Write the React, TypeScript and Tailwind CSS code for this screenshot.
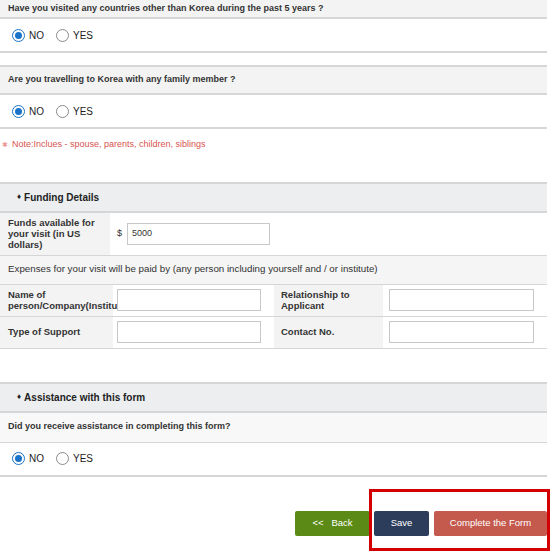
import React from 'react';

function Radio({ checked, label }: { checked?: boolean; label: string }) {
  return (
    <label className="flex items-center gap-[4px]">
      <span
        className={`flex h-[13px] w-[13px] items-center justify-center rounded-full border ${
          checked ? 'border-[#1a73c9]' : 'border-[#8a8a8a]'
        } bg-white`}
      >
        {checked && <span className="h-[7px] w-[7px] rounded-full bg-[#1a73c9]" />}
      </span>
      <span className="text-[10px] text-[#222]">{label}</span>
    </label>
  );
}

function RadioRow() {
  return (
    <div className="flex h-[34px] items-center gap-[12px] border-b-2 border-[#d6d6d6] pl-[12px]">
      <Radio checked label="NO" />
      <Radio label="YES" />
    </div>
  );
}

function SectionHeader({ title }: { title: string }) {
  return (
    <div className="flex h-[31px] items-center border-y-2 border-[#d4d6d8] bg-[#eceef0] pl-[17px] text-[10px] font-bold text-[#222]">
      <span className="mr-[3px] text-[8px]">♦</span>
      {title}
    </div>
  );
}

function TextInput({ value, className }: { value?: string; className: string }) {
  return (
    <div
      className={`relative z-10 flex h-[22px] items-center border border-[#c8c8c8] bg-white pl-[4px] text-[9px] text-[#333] ${className}`}
    >
      {value}
    </div>
  );
}

export default function App() {
  return (
    <div className="relative h-[558px] w-[553px] overflow-hidden bg-white font-['Liberation_Sans',Arial,sans-serif]">
      <div className="w-[547px]">
        {/* Question 1 */}
        <div className="flex h-[19px] items-center border-b-2 border-[#d6d6d6] bg-[#f3f3f3] pl-[8px] text-[9px] font-bold text-[#333]">
          Have you visited any countries other than Korea during the past 5 years ?
        </div>
        <RadioRow />

        {/* Question 2 */}
        <div className="mt-[12px] flex h-[30px] items-center border-y-2 border-[#d6d6d6] bg-[#f3f3f3] pl-[8px] text-[9px] font-bold text-[#333]">
          Are you travelling to Korea with any family member ?
        </div>
        <RadioRow />

        <div className="mt-[9px] flex items-center pl-[2px] text-[9px] text-[#d9534f]">
          <span className="mr-[4px] text-[7px] text-[#e99]">✱</span>
          Note:Inclues - spouse, parents, children, siblings
        </div>

        {/* Funding Details */}
        <div className="mt-[30px]">
          <SectionHeader title="Funding Details" />
          <div className="flex h-[43px] border-b border-[#d6d6d6]">
            <div className="flex w-[110px] items-center bg-[#f3f3f3] pl-[8px] text-[9.5px] font-bold leading-[11px] text-[#333]">
              Funds available for your visit (in US dollars)
            </div>
            <div className="flex items-center pl-[7px]">
              <span className="mr-[5px] text-[9px] text-[#333]">$</span>
              <TextInput value="5000" className="w-[143px]" />
            </div>
          </div>
          <div className="flex h-[29px] items-center border-b border-[#d6d6d6] bg-[#f5f5f5] pl-[8px] text-[9.75px] text-[#333]">
            Expenses for your visit will be paid by (any person including yourself and / or institute)
          </div>
          <div className="flex h-[32px] border-b border-[#d6d6d6]">
            <div className="flex w-[113px] items-center whitespace-nowrap bg-[#f3f3f3] pl-[8px] text-[9.5px] font-bold leading-[11px] text-[#333]">
              <span>
                Name of
                <br />
                person/Company(Institute)
              </span>
            </div>
            <div className="flex w-[161px] items-center pl-[4px]">
              <TextInput className="w-[144px]" />
            </div>
            <div className="flex w-[109px] items-center bg-[#f3f3f3] pl-[7px] text-[9.5px] font-bold leading-[11px] text-[#333]">
              Relationship to Applicant
            </div>
            <div className="flex items-center pl-[6px]">
              <TextInput className="w-[145px]" />
            </div>
          </div>
          <div className="flex h-[32px] border-b border-[#d6d6d6]">
            <div className="flex w-[113px] items-center bg-[#f3f3f3] pl-[8px] text-[9.5px] font-bold text-[#333]">
              Type of Support
            </div>
            <div className="flex w-[161px] items-center pl-[4px]">
              <TextInput className="w-[144px]" />
            </div>
            <div className="flex w-[109px] items-center bg-[#f3f3f3] pl-[7px] text-[9.5px] font-bold text-[#333]">
              Contact No.
            </div>
            <div className="flex items-center pl-[6px]">
              <TextInput className="w-[145px]" />
            </div>
          </div>
        </div>

        {/* Assistance */}
        <div className="mt-[33px]">
          <SectionHeader title="Assistance with this form" />
          <div className="flex h-[30px] items-center border-b border-[#d6d6d6] bg-[#f8f8f8] pl-[8px] text-[9px] font-bold text-[#333]">
            Did you receive assistance in completing this form?
          </div>
          <RadioRow />
        </div>

        {/* Buttons */}
        <div className="mt-[34px] flex justify-end gap-[4px]">
          <button className="h-[25px] w-[75px] rounded-[2px] bg-[#5b8a17] text-[9.5px] text-white">
            &lt;&lt;&nbsp;&nbsp; Back
          </button>
          <button className="h-[25px] w-[55px] rounded-[2px] bg-[#2b3d5b] text-[9.5px] text-white">
            Save
          </button>
          <button className="ml-[1px] h-[25px] w-[113px] rounded-[2px] bg-[#c4594d] text-[9.5px] text-white">
            Complete the Form
          </button>
        </div>
      </div>

      {/* Highlight box */}
      <div className="absolute left-[369px] top-[489px] h-[62px] w-[181px] border-[3px] border-[#d40000]" />
    </div>
  );
}
